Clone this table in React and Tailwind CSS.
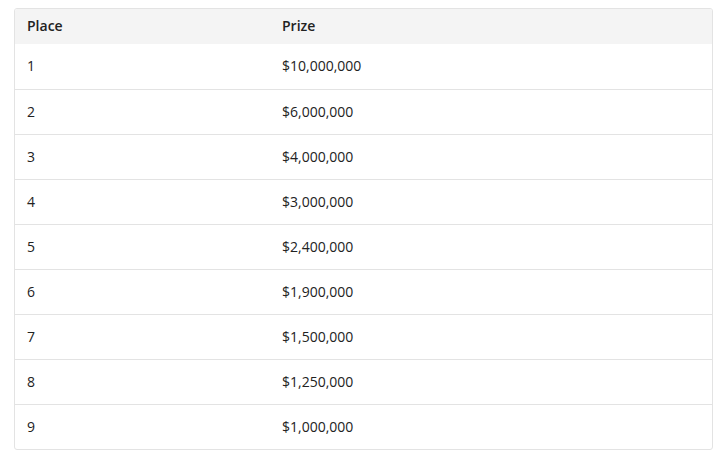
import React from "react";

const rows = [
  ["1", "$10,000,000"],
  ["2", "$6,000,000"],
  ["3", "$4,000,000"],
  ["4", "$3,000,000"],
  ["5", "$2,400,000"],
  ["6", "$1,900,000"],
  ["7", "$1,500,000"],
  ["8", "$1,250,000"],
  ["9", "$1,000,000"],
];

export default function App() {
  return (
    <div
      className="w-[727px] h-[456px] bg-white pt-[8px] pl-[14px]"
      style={{ fontFamily: '"Open Sans", "Noto Sans", sans-serif' }}
    >
      <div className="w-[699px] border border-[#e3e3e3] rounded-[3px] overflow-hidden text-[14px] text-[#222]">
        <div className="flex h-[35px] items-center pb-[2px] bg-[#f4f4f4] font-semibold">
          <div className="w-[256px] pl-[12px]">Place</div>
          <div className="flex-1 pl-[11px]">Prize</div>
        </div>
        {rows.map(([place, prize], i) => (
          <div
            key={place}
            className={
              "flex items-center pb-[2px] " +
              (i > 0 ? "h-[45px] border-t border-[#e3e3e3]" : "h-[45px]")
            }
          >
            <div className="w-[256px] pl-[12px]">{place}</div>
            <div className="flex-1 pl-[11px]">{prize}</div>
          </div>
        ))}
      </div>
    </div>
  );
}
